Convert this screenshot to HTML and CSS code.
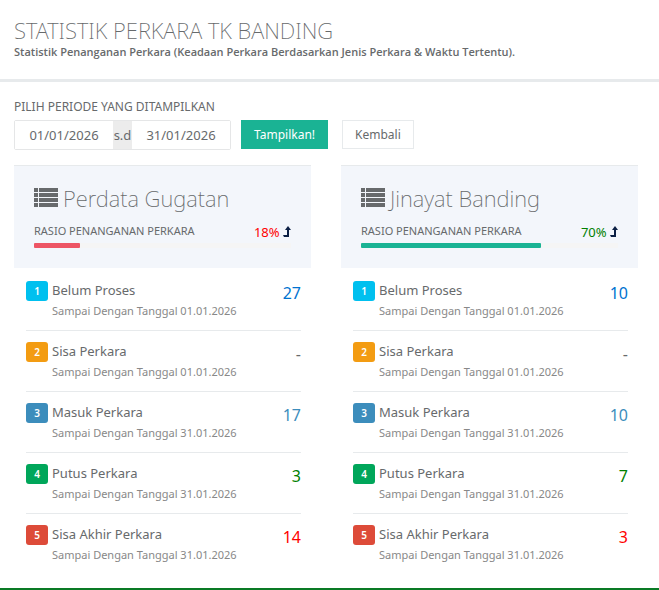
FILE: index.html
```html
<!DOCTYPE html>
<html lang="id">

<head>
  <meta charset="UTF-8" />
  <meta name="viewport" content="width=device-width, initial-scale=1.0" />
  <title>Statistik Perkara TK Banding</title>
  <link rel="stylesheet" href="styles.css">
</head>

<body>
  <!-- Shared icons -->
  <svg class="sprite" aria-hidden="true">
    <symbol id="icon-list" viewBox="0 0 24 20">
      <path d="M0 0h4v4H0zM5 0h19v4H5zM0 5h4v4H0zM5 5h19v4H5zM0 10h4v4H0zM5 10h19v4H5zM0 15h4v4H0zM5 15h19v4H5z" />
    </symbol>
    <symbol id="icon-up" viewBox="0 0 8 11">
      <path d="M5 0L8 4H6v7H1L0 9h4V4H2z" />
    </symbol>
  </svg>

  <header class="page-header">
    <h1>STATISTIK PERKARA TK BANDING</h1>
    <p>Statistik Penanganan Perkara (Keadaan Perkara Berdasarkan Jenis Perkara &amp; Waktu Tertentu).</p>
  </header>

  <main>
    <form class="filter">
      <label for="start">PILIH PERIODE YANG DITAMPILKAN</label>
      <div class="filter-row">
        <div class="date-range">
          <input type="text" id="start" name="start" value="01/01/2026">
          <span>s.d</span>
          <input type="text" name="end" value="31/01/2026" aria-label="Sampai dengan">
        </div>
        <button type="button" class="btn btn-primary">Tampilkan!</button>
        <button type="button" class="btn">Kembali</button>
      </div>
    </form>

    <div class="cards">
      <section class="card">
        <div class="card-head">
          <h2><svg class="icon-list"><use href="#icon-list" /></svg>Perdata Gugatan</h2>
          <div class="ratio">
            <span>RASIO PENANGANAN PERKARA</span>
            <span class="percent red">18% <svg class="icon-up"><use href="#icon-up" /></svg></span>
          </div>
          <div class="progress"><div class="bar bar-danger" style="width: 18%"></div></div>
        </div>
        <ul class="stats">
          <li>
            <span class="badge aqua">1</span>
            <div class="info"><h3>Belum Proses</h3><p>Sampai Dengan Tanggal 01.01.2026</p></div>
            <span class="count blue">27</span>
          </li>
          <li>
            <span class="badge orange">2</span>
            <div class="info"><h3>Sisa Perkara</h3><p>Sampai Dengan Tanggal 01.01.2026</p></div>
            <span class="count">-</span>
          </li>
          <li>
            <span class="badge steel">3</span>
            <div class="info"><h3>Masuk Perkara</h3><p>Sampai Dengan Tanggal 31.01.2026</p></div>
            <span class="count light-blue">17</span>
          </li>
          <li>
            <span class="badge leaf">4</span>
            <div class="info"><h3>Putus Perkara</h3><p>Sampai Dengan Tanggal 31.01.2026</p></div>
            <span class="count green">3</span>
          </li>
          <li>
            <span class="badge brick">5</span>
            <div class="info"><h3>Sisa Akhir Perkara</h3><p>Sampai Dengan Tanggal 31.01.2026</p></div>
            <span class="count red">14</span>
          </li>
        </ul>
      </section>

      <section class="card">
        <div class="card-head">
          <h2><svg class="icon-list"><use href="#icon-list" /></svg>Jinayat Banding</h2>
          <div class="ratio">
            <span>RASIO PENANGANAN PERKARA</span>
            <span class="percent green">70% <svg class="icon-up"><use href="#icon-up" /></svg></span>
          </div>
          <div class="progress"><div class="bar" style="width: 70%"></div></div>
        </div>
        <ul class="stats">
          <li>
            <span class="badge aqua">1</span>
            <div class="info"><h3>Belum Proses</h3><p>Sampai Dengan Tanggal 01.01.2026</p></div>
            <span class="count blue">10</span>
          </li>
          <li>
            <span class="badge orange">2</span>
            <div class="info"><h3>Sisa Perkara</h3><p>Sampai Dengan Tanggal 01.01.2026</p></div>
            <span class="count">-</span>
          </li>
          <li>
            <span class="badge steel">3</span>
            <div class="info"><h3>Masuk Perkara</h3><p>Sampai Dengan Tanggal 31.01.2026</p></div>
            <span class="count light-blue">10</span>
          </li>
          <li>
            <span class="badge leaf">4</span>
            <div class="info"><h3>Putus Perkara</h3><p>Sampai Dengan Tanggal 31.01.2026</p></div>
            <span class="count green">7</span>
          </li>
          <li>
            <span class="badge brick">5</span>
            <div class="info"><h3>Sisa Akhir Perkara</h3><p>Sampai Dengan Tanggal 31.01.2026</p></div>
            <span class="count red">3</span>
          </li>
        </ul>
      </section>
    </div>
  </main>
</body>

</html>
```
FILE: styles.css
```css
* {
  margin: 0;
  padding: 0;
  box-sizing: border-box;
}

body {
  font-family: "Noto Sans", "Open Sans", sans-serif;
  font-size: 13px;
  line-height: 20px;
  color: #676a6c;
  background: #fff;
}

.sprite {
  display: none;
}

.page-header {
  padding: 16px 14px 19px;
  border-bottom: 3px solid #e7eaec;
}

h1 {
  font-size: 22px;
  font-weight: 200;
  line-height: 28px;
}

.page-header p {
  font-family: "Open Sans", sans-serif;
  font-size: 11px;
  font-weight: 600;
  line-height: 16px;
}

main {
  padding: 15px 21px 14px 14px;
  border-bottom: 2px solid #0a7a25;
}

.filter label {
  display: block;
  font-size: 12px;
  line-height: 20px;
  margin-bottom: 3px;
}

.filter-row {
  display: flex;
  align-items: flex-start;
}

.date-range {
  display: flex;
  width: 217px;
  height: 30px;
  margin-right: 10px;
  border: 1px solid #e5e6e7;
  border-radius: 2px;
}

.date-range input {
  flex: 1;
  min-width: 0;
  border: none;
  font: inherit;
  text-align: center;
  color: inherit;
}

.date-range span {
  width: 19px;
  background: #ececec;
  line-height: 28px;
  text-align: center;
}

.btn {
  height: 29px;
  padding: 0 12px;
  border: 1px solid #e7eaec;
  background: #fff;
  color: inherit;
  font: inherit;
  font-size: 12px;
  cursor: pointer;
}

.btn-primary {
  margin-right: 14px;
  border-color: #1ab394;
  background: #1ab394;
  color: #fff;
}

.cards {
  display: grid;
  grid-template-columns: 1fr 1fr;
  gap: 30px;
  margin-top: 15px;
}

.card-head {
  padding: 16px 20px 20px;
  border-top: 1px solid #e7eaec;
  background: #f3f6fb;
}

h2 {
  display: flex;
  align-items: center;
  gap: 5px;
  font-size: 22px;
  font-weight: 200;
  line-height: 32px;
}

.icon-list {
  width: 24px;
  height: 20px;
  fill: #676a6c;
}

.ratio {
  display: flex;
  justify-content: space-between;
  margin-top: 7px;
  font-size: 11px;
  line-height: 20px;
}

.percent {
  font-size: 13px;
  line-height: 22px;
}

.icon-up {
  width: 8px;
  height: 11px;
  fill: #0b1f44;
}

.progress {
  height: 5px;
  background: #f5f5f5;
}

.bar {
  height: 5px;
  border-radius: 1px;
  background: #1ab394;
}

.bar-danger {
  background: #ed5565;
}

.stats {
  padding: 2px 10px 0 12px;
  list-style: none;
}

.stats li {
  display: flex;
  align-items: flex-start;
  gap: 4px;
  padding: 10px 0 8px;
  border-bottom: 1px solid #e7eaec;
}

.stats li:last-child {
  border-bottom: none;
}

.badge {
  width: 22px;
  height: 20px;
  margin-top: 1px;
  border-radius: 3px;
  font-size: 10px;
  font-weight: 600;
  text-align: center;
  color: #fff;
}

.info {
  flex: 1;
}

.info h3 {
  font-size: 13px;
  font-weight: 400;
  line-height: 20px;
}

.info p {
  font-size: 11px;
  line-height: 22px;
  color: #888;
}

.count {
  font-size: 16px;
  line-height: 26px;
}

.aqua { background: #00c0ef; }
.orange { background: #f39c12; }
.steel { background: #3c8dbc; }
.leaf { background: #00a65a; }
.brick { background: #dd4b39; }

.blue { color: #0073d0; }
.light-blue { color: #3c8dbc; }
.green { color: green; }
.red { color: red; }
```
